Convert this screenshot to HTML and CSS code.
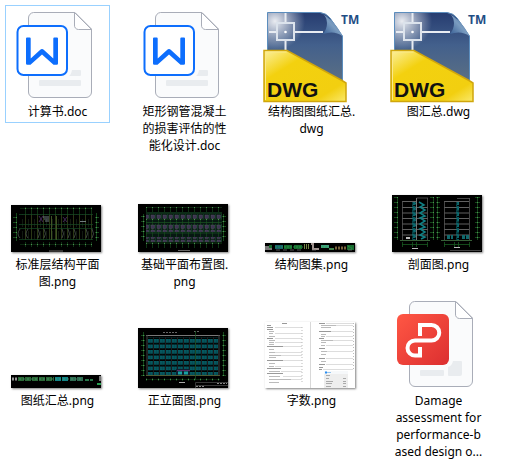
FILE: index.html
```html
<!DOCTYPE html>
<html lang="zh-CN">
<head>
    <meta charset="UTF-8">
    <meta name="viewport" content="width=device-width, initial-scale=1.0">
    <title>文件夹</title>
    <link rel="stylesheet" href="styles.css">
</head>
<body>
    <!-- shared icons and fills -->
    <svg class="defs" aria-hidden="true">
        <defs>
            <linearGradient id="dwg-blue" x1="0" y1="0" x2="0" y2="1">
                <stop offset="0" stop-color="#263c70"/>
                <stop offset="0.45" stop-color="#43608c"/>
                <stop offset="1" stop-color="#5d7183"/>
            </linearGradient>
            <radialGradient id="dwg-shine" cx="0.1" cy="0.12" r="0.4">
                <stop offset="0" stop-color="#fff" stop-opacity="0.9"/>
                <stop offset="1" stop-color="#fff" stop-opacity="0"/>
            </radialGradient>
            <linearGradient id="dwg-curl" x1="0" y1="1" x2="1" y2="0">
                <stop offset="0" stop-color="#28508a"/>
                <stop offset="0.5" stop-color="#7a9cc0"/>
                <stop offset="1" stop-color="#3a6598"/>
            </linearGradient>
            <linearGradient id="dwg-yellow" x1="0" y1="0" x2="1" y2="1">
                <stop offset="0" stop-color="#fbf0a0"/>
                <stop offset="0.3" stop-color="#f3d10f"/>
                <stop offset="0.8" stop-color="#f2cf10"/>
                <stop offset="1" stop-color="#fae96c"/>
            </linearGradient>
            <linearGradient id="pdf-red" x1="0" y1="0" x2="1" y2="1">
                <stop offset="0" stop-color="#ff5744"/>
                <stop offset="1" stop-color="#dc2f30"/>
            </linearGradient>

            <symbol id="paper" viewBox="0 0 97 96">
                <path d="M24.500 5.500H66L82.500 22V85a5.500 5.500 0 0 1-5.500 5.500H25a5.500 5.500 0 0 1-5.500-5.500V11a5.500 5.500 0 0 1 5-5.500z" fill="#fafbfc" stroke="#a9adb8"/>
                <path d="M65.500 5.500V18a4 4 0 0 0 4 4.500H82.500z" fill="#fff" stroke="#a9adb8"/>
            </symbol>

            <symbol id="icon-doc" viewBox="0 0 97 96">
                <use href="#paper"/>
                <path d="M63 63H71Q72 63 72 64V68Q72 69 71 69H60Q62 68 63 63z" fill="#e9ecef"/>
                <rect x="30" y="73" width="42" height="6" rx="1" fill="#e9ecef"/>
                <rect x="8.500" y="19" width="49.500" height="49" rx="6" fill="#fff" stroke="#0d6efd" stroke-width="2"/>
                <path d="M17 31.500Q17 30.500 18 30.500H20.700Q21.700 30.500 21.700 31.500V51.500L31 43Q33 41.200 35 43L44.300 51.500V31.500Q44.300 30.500 45.300 30.500H48Q49 30.500 49 31.500V56.500Q49 57.700 47.700 57.700H44.500L33 47.500L21.500 57.700H18.300Q17 57.700 17 56.500z" fill="#0d6efd"/>
            </symbol>

            <symbol id="icon-pdf" viewBox="0 0 97 96">
                <use href="#paper"/>
                <rect x="30" y="74" width="24" height="6" rx="1" fill="#e9ecef"/>
                <path d="M63 65H71Q72 65 72 66V78Q72 80 70 80H59Q58 80 58 79V71Q62 70 63 65z" fill="#e9ecef"/>
                <rect x="7" y="18" width="52" height="51" rx="6" fill="url(#pdf-red)"/>
                <path d="M30 40V29H41.500a7.500 7.500 0 0 1 0 15.500H25a7.500 7.500 0 0 0 0 15H30V51" fill="none" stroke="#fff" stroke-width="4"/>
            </symbol>

            <symbol id="icon-dwg" viewBox="0 0 97 96">
                <path d="M4.500 5.500H57Q63 6 67 11L79.500 29V78H4.500z" fill="url(#dwg-blue)"/>
                <path d="M4.500 5.500H57Q63 6 67 11L79.500 29V78H4.500z" fill="url(#dwg-shine)"/>
                <path d="M4.500 78V5.500H57Q63 6 67 11L79.500 29V78" fill="none" stroke="#5b8dbd"/>
                <path d="M57 5.500Q64 8 64 16Q64 22 60 27Q71 23 79.500 29Q71 12 57 5.500z" fill="url(#dwg-curl)"/>
                <path d="M6 25H13M32 25H60M22.500 6V15M22.500 34V43" stroke="#e8ecf2" stroke-width="2"/>
                <rect x="14" y="16" width="17" height="17" fill="none" stroke="#dce3ec" stroke-width="2"/>
                <circle cx="22.500" cy="25" r="1.300" fill="#fff"/>
                <path d="M1 43.500H24L79 73.500L83 76V94.500H1z" fill="url(#dwg-yellow)" stroke="#d0a60c" stroke-width="1.500"/>
                <path d="M2.500 93V45H23.500" fill="none" stroke="#fbe98a"/>
                <text class="dwg-text" x="4" y="90">DWG</text>
                <text class="tm-text" x="78" y="17">TM</text>
            </symbol>

            <pattern id="ticks" width="6" height="6" patternUnits="userSpaceOnUse">
                <path d="M2.500 0V6" stroke="#14491b" stroke-width="0.700"/>
                <path d="M0 3.500H6" stroke="#103a16" stroke-width="0.600"/>
                <rect x="2" y="3" width="1" height="1" fill="#4d8a52"/>
            </pattern>
            <pattern id="side-ticks" width="4" height="5" patternUnits="userSpaceOnUse">
                <path d="M1.500 0V5M0 2.500H4" stroke="#185a20" stroke-width="0.800"/>
                <rect x="1" y="2" width="1" height="1" fill="#4f8a54"/>
            </pattern>
            <pattern id="rooms" width="6" height="12" patternUnits="userSpaceOnUse">
                <path d="M2.500 0V12" stroke="#36451a" stroke-width="0.800"/>
                <path d="M5.500 2V10" stroke="#1c2c1b" stroke-width="0.600"/>
            </pattern>
            <pattern id="footings" width="6" height="5" patternUnits="userSpaceOnUse">
                <rect x="1" y="1" width="3.500" height="3.500" fill="#3c3350" stroke="#565662" stroke-width="0.400"/>
                <path d="M5.500 0V5" stroke="#174d30" stroke-width="0.600"/>
            </pattern>
            <pattern id="windows" x="10" y="11" width="6" height="5.500" patternUnits="userSpaceOnUse">
                <rect width="4.800" height="3.800" fill="#065c63"/>
                <path d="M2.400 0V4M0 2H5" stroke="#034249" stroke-width="0.500"/>
                <path d="M5.500 0V5.500" stroke="#2c2c2e" stroke-width="0.600"/>
            </pattern>
            <pattern id="stairs" width="4" height="5.500" patternUnits="userSpaceOnUse">
                <rect x="0.500" width="3" height="4.500" fill="#06565c"/>
                <path d="M0 1L4 3L0 5" fill="none" stroke="#0f7c82" stroke-width="0.800"/>
            </pattern>
        </defs>
    </svg>

    <ul class="files">
        <li class="file selected">
            <div class="art"><svg class="icon" viewBox="0 0 97 96"><use href="#icon-doc"/></svg></div>
            <p class="name">计算书.doc</p>
        </li>
        <li class="file">
            <div class="art"><svg class="icon" viewBox="0 0 97 96"><use href="#icon-doc"/></svg></div>
            <p class="name">矩形钢管混凝土<br>的损害评估的性<br>能化设计.doc</p>
        </li>
        <li class="file">
            <div class="art"><svg class="icon" viewBox="0 0 97 96"><use href="#icon-dwg"/></svg></div>
            <p class="name">结构图图纸汇总.<br>dwg</p>
        </li>
        <li class="file">
            <div class="art"><svg class="icon" viewBox="0 0 97 96"><use href="#icon-dwg"/></svg></div>
            <p class="name">图汇总.dwg</p>
        </li>

        <li class="file">
            <div class="art">
                <svg class="thumb" width="90" height="47" viewBox="0 0 90 47">
                    <rect x="9" y="2" width="72" height="7" fill="url(#ticks)"/>
                    <rect x="9" y="37" width="72" height="5" fill="url(#ticks)"/>
                    <rect x="2" y="8" width="4" height="28" fill="url(#side-ticks)"/>
                    <rect x="84" y="8" width="4" height="28" fill="url(#side-ticks)"/>
                    <rect x="9" y="9" width="72" height="26" fill="url(#rooms)"/>
                    <path d="M8 9.500H82M8 19.500H82M8 23.500H82M8 34.500H82" stroke="#164a25" stroke-width="0.700"/>
                    <path d="M9 24q-4 5 0 9M17 24q-4 5 0 9M27 24q3 5 0 9M33 24q3 5 0 9M51 24q3 5 0 9M57 24q3 5 0 9M63 24q3 5 0 9M75 24q3 5 0 9M81 24q3 5 0 9" fill="none" stroke="#56625a" stroke-width="0.700"/>
                    <path d="M32 12h6M33 14h5M34 16h4M69 16.500h6" stroke="#7c8a8c" stroke-width="0.900"/>
                    <path d="M28 11l4 6M32 11l-4 6M52 12l4 5M56 12l-4 5" stroke="#48285e" stroke-width="0.900"/>
                    <path d="M40.500 11V35M45.500 11V35" stroke="#3f5424"/>
                    <path d="M38 46H52" stroke="#666"/>
                </svg>
            </div>
            <p class="name">标准层结构平面<br>图.png</p>
        </li>
        <li class="file">
            <div class="art">
                <svg class="thumb" width="90" height="48" viewBox="0 0 90 48">
                    <rect x="8" y="3" width="76" height="6" fill="url(#ticks)"/>
                    <rect x="8" y="38" width="76" height="6" fill="url(#ticks)"/>
                    <rect x="3" y="10" width="4" height="27" fill="url(#side-ticks)"/>
                    <rect x="84" y="10" width="4" height="27" fill="url(#side-ticks)"/>
                    <rect x="8" y="8" width="76" height="30" fill="#071712"/>
                    <rect x="8" y="14" width="76" height="19" fill="url(#ticks)"/>
                    <path d="M8 9H84M8 18.500H84M8 29H84M8 38H84" stroke="#1b5323" stroke-width="0.700"/>
                    <rect x="8" y="10" width="76" height="5" fill="url(#footings)"/>
                    <rect x="8" y="20" width="76" height="8" fill="url(#footings)"/>
                    <rect x="8" y="33" width="76" height="5" fill="url(#footings)"/>
                    <path d="M40 46.500H52" stroke="#666"/>
                </svg>
            </div>
            <p class="name">基础平面布置图.<br>png</p>
        </li>
        <li class="file">
            <div class="art">
                <svg class="thumb" width="90" height="9" viewBox="0 0 90 9">
                    <path d="M0 3H7V7H0z" fill="#777"/>
                    <path d="M4 2h3v3H4zM19 2h8v4h-8zM29 2h8v4h-8zM82 2h7v5h-7z" fill="#186b2e"/>
                    <path d="M10 2h8v4h-8z" fill="#17606a"/>
                    <path d="M39.500 1v5M41.500 1v5M43.500 1v5" stroke="#718445"/>
                    <path d="M46 1h2v5h6" fill="none" stroke="#a09490" stroke-width="2"/>
                    <path d="M56 2h8v3h-8z" fill="#3fa07b"/>
                    <path d="M64 6h5" stroke="#42824b" stroke-width="2"/>
                    <path d="M70 5h11" stroke="#79633c" stroke-width="3" stroke-dasharray="2 1"/>
                    <path d="M10 4h28M57 4h6M83 3l5 3" stroke="#2ca151" stroke-width="0.800" stroke-dasharray="2 1"/>
                    <path d="M11 7h27M47 7h6M83 7h5" stroke="#777" stroke-width="0.700" stroke-dasharray="4 3"/>
                </svg>
            </div>
            <p class="name">结构图集.png</p>
        </li>
        <li class="file">
            <div class="art">
                <svg class="thumb" width="90" height="57" viewBox="0 0 90 57">
                    <rect x="2" y="2" width="4" height="43" fill="url(#side-ticks)"/>
                    <rect x="38" y="2" width="4" height="43" fill="url(#side-ticks)"/>
                    <rect x="44" y="2" width="4" height="43" fill="url(#side-ticks)"/>
                    <rect x="83" y="2" width="5" height="43" fill="url(#side-ticks)"/>
                    <path d="M10 6.500H24M10 12.500H36M10 18H36M10 23.500H36M10 29H36M10 34.500H36M10 40H36M52 6.500H77M52 12.500H77M52 18H77M52 23.500H77M52 29H77M52 34.500H77M52 40H77" stroke="#7a7a7a" stroke-width="0.800"/>
                    <path d="M10.500 6V45M35.500 3V45M24.500 3H36M52.500 6V45M77.500 3V45M65 3.500H78" fill="none" stroke="#555" stroke-width="0.800"/>
                    <rect x="20" y="7" width="4" height="38" fill="url(#stairs)"/>
                    <rect x="64" y="7" width="3" height="38" fill="url(#stairs)"/>
                    <path d="M24.500 3V45" stroke="#777"/>
                    <path d="M27 7l5 3-4 2 5 3-5 3 5 3-5 2 5 3-5 3 5 3-5 2 5 3-5 3 5 2-4 2" fill="none" stroke="#118085" stroke-width="1.500"/>
                    <path d="M8 45.500H38M49 45.500H80" stroke="#365e37"/>
                    <path d="M55 42h6M70 42h8" stroke="#11686c" stroke-width="4" stroke-dasharray="3 1"/>
                    <path d="M14 43h4" stroke="#bbb" stroke-width="2"/>
                    <path d="M10.500 47v5M20.500 47v5M24.500 47v5M35.500 47v5M10 49.500h26M52.500 47v5M62.500 47v5M66.500 47v5M77.500 47v5M52 49.500h26" stroke="#185a21" stroke-width="0.800"/>
                    <path d="M20 53.500h6M62 52.500h6" stroke="#bbb"/>
                    <path d="M58 55.500h31" stroke="#444"/>
                </svg>
            </div>
            <p class="name">剖面图.png</p>
        </li>

        <li class="file">
            <div class="art">
                <svg class="thumb" width="90" height="13" viewBox="0 0 90 13">
                    <path d="M1 4h5" stroke="#999" stroke-width="3" stroke-dasharray="2 1"/>
                    <path d="M7 4h36" stroke="#2a6836" stroke-width="4" stroke-dasharray="6 1"/>
                    <path d="M44 4h14" stroke="#128486" stroke-width="4" stroke-dasharray="6 1"/>
                    <path d="M59 4h14" stroke="#2f6c52" stroke-width="4" stroke-dasharray="6 1"/>
                    <path d="M8 4h64" stroke="#4a9c74" stroke-width="0.800" stroke-dasharray="2 2"/>
                    <path d="M74 5h8" stroke="#28774a" stroke-width="2" stroke-dasharray="4 1"/>
                    <path d="M89 1v5" stroke="#777" stroke-width="2"/>
                    <path d="M86 9h4" stroke="#27a050" stroke-width="2"/>
                </svg>
            </div>
            <p class="name">图纸汇总.png</p>
        </li>
        <li class="file">
            <div class="art">
                <svg class="thumb" width="90" height="60" viewBox="0 0 90 60">
                    <rect x="3" y="4" width="4" height="44" fill="url(#side-ticks)"/>
                    <rect x="84" y="4" width="4" height="44" fill="url(#side-ticks)"/>
                    <path d="M25 4.500H40M56 3.500H61" stroke="#666" stroke-dasharray="2 1"/>
                    <path d="M8 7.500H82" stroke="#777"/>
                    <path d="M9 7V47M81 7V47" stroke="#444"/>
                    <rect x="10" y="9" width="70" height="38" fill="url(#windows)"/>
                    <path d="M8 47.500H82" stroke="#4e5c35"/>
                    <rect x="38" y="41" width="14" height="6" fill="#102030"/>
                    <path d="M39 42.500H52" stroke="#58306a"/>
                    <path d="M40 45h4M46 45h4" stroke="#18a0a2" stroke-width="3"/>
                    <path d="M57.500 3V52" stroke="#1d5c28" stroke-width="0.700"/>
                    <rect x="8" y="50" width="74" height="3" fill="url(#ticks)"/>
                    <path d="M41 54.500h6" stroke="#aaa"/>
                    <path d="M57.500 60V54.500H90M57 57.500H90" fill="none" stroke="#383838"/>
                    <path d="M79 55.500h10M58 58.500h8" stroke="#888" stroke-dasharray="2 1"/>
                </svg>
            </div>
            <p class="name">正立面图.png</p>
        </li>
        <li class="file">
            <div class="art">
                <svg class="thumb page" width="90" height="66" viewBox="0 0 90 66">
                    <path d="M45.500 0V66" stroke="#d8d8d8"/>
                    <path d="M17 1.500h5M2 3.500h4M2 5.500h6M2 7.500h6M2 16.500h6M2 24.500h16M2 38.500h16M2 46.500h14M2 51.500h16M54 1.500h6M54 9.500h12M54 16.500h5M54 26.500h6M54 36.500h6M54 42.500h6M54 45.500h4M54 47.500h3" stroke="#999"/>
                    <path d="M4 9.500h5M4 11.500h4M4 14.500h6M4 18.500h6M4 20.500h5M4 22.500h5M4 27.500h5M4 30.500h7M4 33.500h12M4 35.500h7M4 41.500h6M4 44.500h5M4 49.500h11M4 54.500h11M4 57.500h22M4 60.500h10M56 3.500h15M56 5.500h10M56 12.500h5M56 14.500h4M56 18.500h12M56 20.500h5M56 23.500h4M56 29.500h6M56 32.500h5M56 39.500h5" stroke="#bbb"/>
                    <path d="M10 5.500h27M10 11.500h27M10 16.500h27M10 20.500h27M18 24.500h19M10 30.500h27M16 33.500h21M18 38.500h19M10 44.500h27M16 49.500h21M18 54.500h19M26 57.500h11M61 1.500h27M71 3.500h17M66 9.500h22M61 14.500h27M68 18.500h20M61 23.500h27M62 29.500h26M61 36.500h27M61 42.500h27M58 47.500h30" stroke="#ddd"/>
                    <path d="M37 5v55M88.500 1v47" stroke="#bbb" stroke-dasharray="1 2"/>
                    <rect x="59" y="49" width="24" height="17" fill="#eee"/>
                    <rect x="59" y="49" width="24" height="3" fill="#f6f8fa"/>
                    <path d="M60 50.500h2" stroke="#2b8df0" stroke-width="2"/>
                    <path d="M62 50.500h4" stroke="#98c5ed"/>
                    <path d="M61 53.500h4M61 56.500h3M61 59.500h7M61 61.500h6M61 64.500h5M78 56.500h3M78 59.500h3M78 61.500h3M78 64.500h3" stroke="#aaa"/>
                </svg>
            </div>
            <p class="name">字数.png</p>
        </li>
        <li class="file">
            <div class="art"><svg class="icon" viewBox="0 0 97 96"><use href="#icon-pdf"/></svg></div>
            <p class="name">Damage<br>assessment for<br>performance-b<br>ased design o...</p>
        </li>
    </ul>
</body>
</html>
```

FILE: styles.css
```css
* {
    margin: 0;
    padding: 0;
    box-sizing: border-box;
}

body {
    font-family: "Noto Sans", "Noto Sans CJK SC", sans-serif;
    font-size: 12px;
    line-height: 17px;
    color: #000;
    background: #fff;
}

.defs {
    position: absolute;
    width: 0;
    height: 0;
}

.files {
    display: grid;
    grid-template-columns: repeat(auto-fill, 105px);
    align-items: start;
    gap: 1px 22px;
    padding: 5px 0 0 5px;
    list-style: none;
}

.file {
    padding: 1px 0 2px;
    border: 1px solid transparent;
}

.file.selected {
    border-color: #99d1ff;
}

.art {
    display: flex;
    align-items: flex-end;
    width: 97px;
    height: 96px;
    margin: 0 auto;
}

.icon {
    width: 97px;
    height: 96px;
}

.thumb {
    margin: 0 0 4px 2px;
    background: #000;
    box-shadow: 1px 1px 2px rgba(0, 0, 0, 0.5);
}

.thumb.page {
    background: #fff;
}

.name {
    text-align: center;
    white-space: nowrap;
}

.dwg-text {
    font-family: "Liberation Sans", sans-serif;
    font-size: 21px;
    font-weight: bold;
    fill: #111;
}

.tm-text {
    font-family: "Open Sans", sans-serif;
    font-size: 12px;
    font-weight: bold;
    fill: #1f4e85;
}
```
